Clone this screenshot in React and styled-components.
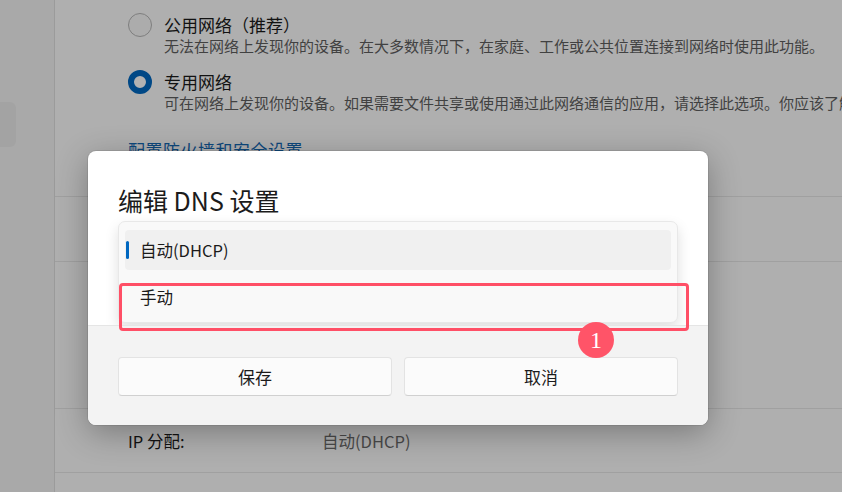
import React from "react";
import styled, { createGlobalStyle } from "styled-components";

const GlobalStyle = createGlobalStyle`
  html, body {
    margin: 0;
    padding: 0;
    width: 842px;
    height: 492px;
    overflow: hidden;
    font-family: "Noto Sans CJK SC", "Noto Sans", sans-serif;
  }
`;

const Page = styled.div`
  position: relative;
  display: flex;
  width: 842px;
  height: 492px;
  overflow: hidden;
  background: #fbfbfb;
`;

const Sidebar = styled.aside`
  width: 55px;
  flex-shrink: 0;
  background: #f2f2f2;
  border-right: 1px solid #dedede;
  padding-top: 102px;
  box-sizing: border-box;
`;

const NavPill = styled.div`
  width: 16px;
  height: 45px;
  border-radius: 0 6px 6px 0;
  background: #eaeaea;
`;

const Content = styled.main`
  flex: 1;
  min-width: 0;
  overflow: hidden;
  display: flex;
  flex-direction: column;
`;

const Section = styled.section`
  height: ${(p) => p.h}px;
  flex-shrink: 0;
  box-sizing: border-box;
  padding-left: 73px;
  border-bottom: 1px solid #e5e5e5;
`;

const RadioGroup = styled.div`
  display: flex;
  flex-direction: column;
  gap: 15px;
  padding-top: 14px;
`;

const Option = styled.div`
  display: flex;
  gap: 12px;
`;

const Radio = styled.span`
  width: 24px;
  height: 24px;
  box-sizing: border-box;
  border-radius: 50%;
  flex-shrink: 0;
  margin-top: -1px;
  border: ${(p) => (p.checked ? "6px solid #0067c0" : "1.5px solid #b5b5b5")};
  background: ${(p) => (p.checked ? "#ffffff" : "#f7f7f7")};
`;

const OptionText = styled.div`
  display: flex;
  flex-direction: column;
  min-width: 0;
`;

const OptionTitle = styled.div`
  font-size: 17px;
  line-height: 22px;
  color: #1b1b1b;
`;

const OptionDesc = styled.div`
  font-size: 15px;
  line-height: 20px;
  color: #5e5e5e;
  white-space: nowrap;
`;

const Link = styled.div`
  margin-top: 26px;
  font-size: 17px;
  line-height: 22px;
  color: #1467b2;
  letter-spacing: 0.5px;
`;

const InfoRow = styled.div`
  display: flex;
  align-items: center;
  height: 100%;
`;

const InfoLabel = styled.span`
  width: 194px;
  font-size: 16.5px;
  color: #1b1b1b;
`;

const InfoValue = styled.span`
  font-size: 16.5px;
  color: #6a6a6a;
`;

const Backdrop = styled.div`
  position: absolute;
  inset: 0;
  background: rgba(0, 0, 0, 0.3);
`;

const Dialog = styled.div`
  position: absolute;
  left: 88px;
  top: 151px;
  width: 620px;
  height: 274px;
  border-radius: 8px;
  overflow: hidden;
  display: flex;
  flex-direction: column;
  background: #ffffff;
  box-shadow: 0 8px 32px rgba(0, 0, 0, 0.3), 0 0 0 1px rgba(0, 0, 0, 0.08);
`;

const DialogBody = styled.div`
  height: 174px;
  box-sizing: border-box;
  padding: 33px 30px 0 30px;
`;

const DialogTitle = styled.h2`
  margin: 0 0 5px 0;
  font-size: 25px;
  line-height: 32px;
  font-weight: 400;
  color: #1b1b1b;
`;

const Popup = styled.div`
  box-sizing: border-box;
  height: 102px;
  display: flex;
  flex-direction: column;
  gap: 7px;
  padding: 8px 6px 5px 6px;
  background: #f9f9f9;
  border: 1px solid #e8e8e8;
  border-radius: 7px;
  box-shadow: 0 6px 14px rgba(0, 0, 0, 0.13);
`;

const Item = styled.div`
  height: 40px;
  display: flex;
  align-items: center;
  gap: 11px;
  padding-left: 1px;
  border-radius: 4px;
  background: ${(p) => (p.selected ? "#f0f0f0" : "transparent")};
  font-size: 16.5px;
  color: #1b1b1b;
`;

const Indicator = styled.span`
  width: 3px;
  height: 18px;
  border-radius: 2px;
  background: ${(p) => (p.on ? "#0067c0" : "transparent")};
`;

const Footer = styled.div`
  flex: 1;
  display: grid;
  grid-template-columns: 1fr 1fr;
  gap: 12px;
  align-items: start;
  padding: 31px 30px 0 30px;
  background: #f3f3f3;
  border-top: 1px solid #e5e5e5;
`;

const Button = styled.button`
  height: 39px;
  border: 1px solid #e3e3e3;
  border-bottom-color: #d0d0d0;
  border-radius: 4px;
  background: #fbfbfb;
  font-family: "Noto Sans CJK SC", "Noto Sans", sans-serif;
  font-size: 17px;
  color: #1b1b1b;
`;

const Highlight = styled.div`
  position: absolute;
  left: 31px;
  top: 132px;
  width: 570px;
  height: 48px;
  box-sizing: border-box;
  border: 3.5px solid #ff4f66;
  border-radius: 4px;
`;

const Badge = styled.div`
  position: absolute;
  left: 490px;
  top: 171px;
  width: 36px;
  height: 36px;
  border-radius: 50%;
  background: #ff5468;
  color: #ffffff;
  display: flex;
  align-items: center;
  justify-content: center;
  font-family: "Liberation Serif", "DejaVu Serif", serif;
  font-size: 24px;
`;

const options = [
  {
    title: "公用网络（推荐）",
    desc: "无法在网络上发现你的设备。在大多数情况下，在家庭、工作或公共位置连接到网络时使用此功能。",
    checked: false,
  },
  {
    title: "专用网络",
    desc: "可在网络上发现你的设备。如果需要文件共享或使用通过此网络通信的应用，请选择此选项。你应该了解并信任网络上的人员和设备。",
    checked: true,
  },
];

export default function App() {
  return (
    <>
      <GlobalStyle />
      <Page>
        <Sidebar>
          <NavPill />
        </Sidebar>
        <Content>
          <Section h={197}>
            <RadioGroup>
              {options.map((o) => (
                <Option key={o.title}>
                  <Radio checked={o.checked} />
                  <OptionText>
                    <OptionTitle>{o.title}</OptionTitle>
                    <OptionDesc>{o.desc}</OptionDesc>
                  </OptionText>
                </Option>
              ))}
            </RadioGroup>
            <Link>配置防火墙和安全设置</Link>
          </Section>
          <Section h={65} />
          <Section h={147} />
          <Section h={64}>
            <InfoRow>
              <InfoLabel>IP 分配:</InfoLabel>
              <InfoValue>自动(DHCP)</InfoValue>
            </InfoRow>
          </Section>
        </Content>
        <Backdrop />
        <Dialog>
          <DialogBody>
            <DialogTitle>编辑 DNS 设置</DialogTitle>
            <Popup>
              <Item selected>
                <Indicator on />
                自动(DHCP)
              </Item>
              <Item>
                <Indicator />
                手动
              </Item>
            </Popup>
          </DialogBody>
          <Footer>
            <Button>保存</Button>
            <Button>取消</Button>
          </Footer>
          <Highlight />
          <Badge>1</Badge>
        </Dialog>
      </Page>
    </>
  );
}
